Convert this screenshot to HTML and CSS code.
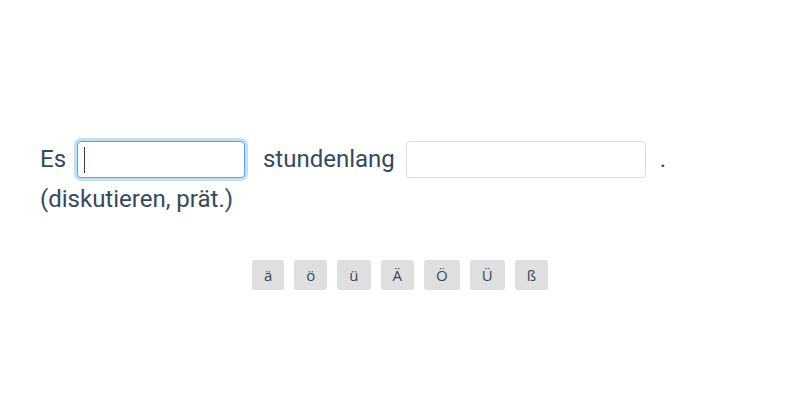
FILE: index.html
```html
<!DOCTYPE html>
<html lang="de">
<head>
    <meta charset="UTF-8">
    <title>Lückentext</title>
    <link rel="stylesheet" href="styles.css">
</head>
<body>
    <div class="task">
        <p class="sentence">
            <span class="word">Es</span>
            <input class="blank blank-short is-focused" type="text">
            <span class="word">stundenlang</span>
            <input class="blank blank-long" type="text">
            <span class="word">.</span>
            <span class="word">(diskutieren, prät.)</span>
        </p>
        <div class="keys">
            <button class="key">ä</button>
            <button class="key">ö</button>
            <button class="key">ü</button>
            <button class="key">Ä</button>
            <button class="key">Ö</button>
            <button class="key">Ü</button>
            <button class="key">ß</button>
        </div>
    </div>
</body>
</html>
```

FILE: styles.css
```css
body {
    margin: 0;
    background: #fff;
    font-family: Roboto, "Liberation Sans", sans-serif;
    color: #34495e;
}
.task {
    padding: 139px 40px 0 40px;
}
.sentence {
    margin: 0;
    font-size: 24px;
    line-height: 39px;
}
.word {
    vertical-align: middle;
}
.blank {
    box-sizing: border-box;
    height: 37px;
    margin: 0 5px;
    padding: 0 6px;
    border: 1px solid #dcdcdc;
    border-radius: 4px;
    font-family: inherit;
    font-size: 20px;
    color: #34495e;
    vertical-align: middle;
    outline: none;
}
.blank-short {
    width: 168px;
    margin-right: 12px;
}
.blank-long {
    width: 240px;
    margin-right: 8px;
}
/* caret drawn as background so the screenshot shows the active field */
.blank.is-focused {
    border-color: #5aa5e6;
    box-shadow: 0 0 0 3px #c3e0f7;
    background: #fff linear-gradient(#2c3e50, #2c3e50) no-repeat 6px 50% / 1px 26px;
}
.keys {
    display: flex;
    justify-content: center;
    gap: 10px;
    margin-top: 41px;
}
.key {
    height: 30px;
    padding: 0 12px;
    border: none;
    border-radius: 3px;
    background: #dfdfdf;
    font-family: "Open Sans", sans-serif;
    font-size: 15px;
    color: #34495e;
}
```
